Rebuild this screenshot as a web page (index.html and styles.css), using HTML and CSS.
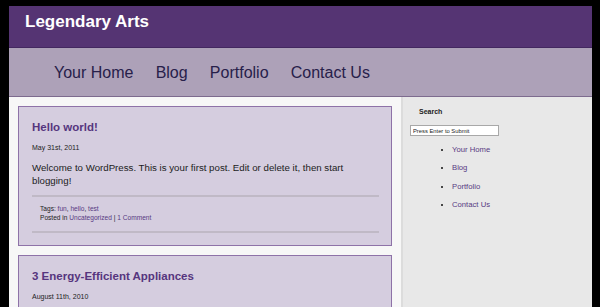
FILE: index.html
```html
<!DOCTYPE html>
<html lang="en">
<head>
  <meta charset="UTF-8" />
  <title>Legendary Arts</title>
  <link rel="stylesheet" href="styles.css">
</head>
<body>
  <div class="page">
    <div class="header">
      <h1>Legendary Arts</h1>
    </div>
    <ul class="nav">
      <li><a href="#">Your Home</a></li>
      <li><a href="#">Blog</a></li>
      <li><a href="#">Portfolio</a></li>
      <li><a href="#">Contact Us</a></li>
    </ul>
    <div class="content">
      <div class="main">
        <div class="post">
          <h2><a href="#">Hello world!</a></h2>
          <p class="date">May 31st, 2011</p>
          <p class="entry">Welcome to WordPress. This is your first post. Edit or delete it, then start blogging!</p>
          <div class="meta">
            <p>Tags: <a href="#">fun</a>, <a href="#">hello</a>, <a href="#">test</a></p>
            <p>Posted in <a href="#">Uncategorized</a> | <a href="#">1 Comment</a></p>
          </div>
        </div>
        <div class="post">
          <h2><a href="#">3 Energy-Efficient Appliances</a></h2>
          <p class="date">August 11th, 2010</p>
        </div>
      </div>
      <div class="sidebar">
        <h3>Search</h3>
        <input class="search" type="text" value="Press Enter to Submit">
        <ul class="links">
          <li><a href="#">Your Home</a></li>
          <li><a href="#">Blog</a></li>
          <li><a href="#">Portfolio</a></li>
          <li><a href="#">Contact Us</a></li>
        </ul>
      </div>
    </div>
  </div>
</body>
</html>
```
FILE: styles.css
```css
body {
  margin: 0;
  padding-top: 6px;
  background: #000;
  font-family: 'Liberation Sans', Arial, sans-serif;
  color: #222;
  height: 301px;
  overflow: hidden;
}
a {
  color: #573a82;
  text-decoration: none;
}
.page {
  margin-left: 9px;
  width: 583px;
}
.header {
  height: 41px;
  background: #553473;
  border-bottom: 1px solid #432860;
}
.header h1 {
  margin: 0;
  padding: 6px 0 0 16px;
  font-size: 17px;
  line-height: 20px;
  color: #fff;
}
.nav {
  display: flex;
  margin: 0;
  padding: 0 0 0 34px;
  list-style: none;
  height: 48px;
  align-items: center;
  background: #ada1b8;
  border-bottom: 1px solid #7d6b8e;
}
.nav li a {
  display: block;
  padding: 2px 11.2px 0 11px;
  font-size: 16px;
  color: #27204a;
}
.content {
  display: flex;
  height: 210px;
  overflow: hidden;
}
.main {
  width: 374px;
  padding: 9px 9px 0;
  background: #f7f7f7;
}
.post {
  background: #d5cddf;
  border: 1px solid #8e72a8;
  padding: 13px 12px 12px 13px;
  margin-bottom: 9px;
}
.post h2 {
  margin: 0;
  font-size: 11.5px;
  line-height: 14px;
}
.post h2 a {
  color: #56357e;
}
.date {
  margin: 9px 0 0;
  font-size: 7px;
  line-height: 9px;
}
.entry {
  margin: 9px 0 0;
  font-size: 9.7px;
  line-height: 13px;
  color: #1c1c1c;
}
.meta {
  margin-top: 8px;
  padding: 8px 0 9px 8px;
  border-top: 2px solid #c0b9c6;
  border-bottom: 2px solid #c0b9c6;
  font-size: 6.6px;
  line-height: 8.5px;
}
.meta p {
  margin: 0;
}
.sidebar {
  flex: 1;
  background: #e8e8e8;
  border-left: 2px solid #dcdcdc;
  padding: 10px 0 0 7px;
}
.sidebar h3 {
  margin: 0 0 0 9px;
  font-size: 7px;
  line-height: 9px;
}
.search {
  display: block;
  box-sizing: border-box;
  width: 89px;
  height: 11px;
  margin-top: 9px;
  padding: 0 2px;
  border: 1px solid #a8a8a8;
  background: #fff;
  font-family: inherit;
  font-size: 5.8px;
  color: #222;
}
.links {
  margin: 0;
  padding: 9px 0 0 42px;
  font-size: 7.7px;
  line-height: 9px;
}
.links li {
  margin-bottom: 9.4px;
}
.links li::marker {
  font-size: 8px;
  color: #111;
}
```
